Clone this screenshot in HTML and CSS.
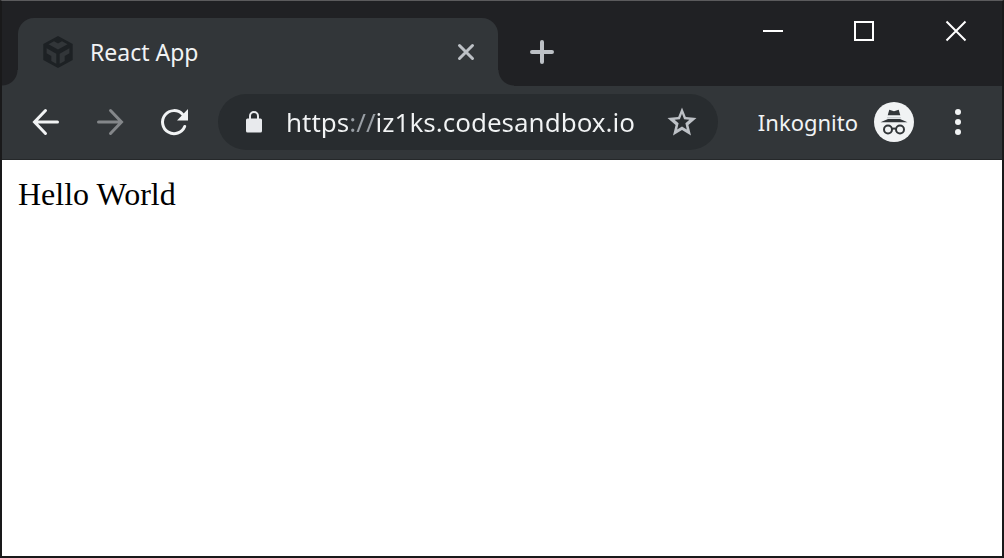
FILE: index.html
```html
<!DOCTYPE html>
<html lang="de">
<head>
<meta charset="utf-8">
<title>React App</title>
<link rel="stylesheet" href="styles.css">
</head>
<body>
<div class="window">
  <header class="tab-strip">
    <div class="tab">
      <svg class="favicon" viewBox="0 0 32 32" aria-hidden="true">
        <path fill-rule="evenodd" d="M16 0 30.700 8V24L16 32 1.300 24V8ZM6.500 8.300 16 13.500 25.500 8.300 20 5.300 16 7.500 12 5.300ZM4.600 12.300V17.300L9.300 20V25L14.300 27.800V17.800ZM27.400 12.300V17.300L22.700 20V25L17.700 27.800V17.800Z"/>
      </svg>
      <span class="tab-title">React App</span>
      <button class="tab-close" aria-label="Tab schließen"><svg viewBox="0 0 20 20"><path d="M3.500 3.500 16.500 16.500M16.500 3.500 3.500 16.500"/></svg></button>
    </div>
    <button class="new-tab" aria-label="Neuer Tab"><svg viewBox="0 0 24 24"><path d="M12 2V22M2 12H22"/></svg></button>
    <div class="window-controls">
      <button aria-label="Minimieren"><svg viewBox="0 0 20 20"><path d="M1 10H21"/></svg></button>
      <button aria-label="Maximieren"><svg viewBox="0 0 20 20"><path d="M1 1H19V19H1Z"/></svg></button>
      <button aria-label="Schließen"><svg viewBox="0 0 20 20"><path d="M.5 .5 19.5 19.5M19.5 .5 .5 19.5"/></svg></button>
    </div>
  </header>
  <nav class="toolbar">
    <div class="nav-buttons">
      <button aria-label="Zurück"><svg viewBox="0 0 32 32"><path class="line" d="M27.500 16H5M15.500 4.500 4.500 16 15.500 27.500"/></svg></button>
      <button aria-label="Vorwärts" disabled><svg viewBox="0 0 32 32"><path class="line" d="M4.500 16H27M16.500 4.500 27.500 16 16.500 27.500"/></svg></button>
      <button aria-label="Neu laden"><svg viewBox="0 0 32 32"><path class="line" d="M26.700 20.500A11.500 11.500 0 1 1 24.500 8.300"/><path class="solid" d="M30 3V14.500H19Z"/></svg></button>
    </div>
    <div class="address-bar">
      <svg class="lock" viewBox="0 0 16 22" aria-hidden="true"><path class="body" d="M1.500 7.500H14.500Q16 7.500 16 9V20Q16 21.500 14.500 21.500H1.500Q0 21.500 0 20V9Q0 7.500 1.500 7.500Z"/><path class="shackle" d="M4 8V5A4 4 0 0 1 12 5V8"/></svg>
      <input class="url" type="text" aria-label="Adresse" value="https://iz1ks.codesandbox.io" spellcheck="false">
      <button class="bookmark" aria-label="Lesezeichen"><svg viewBox="0 0 32 32"><path fill-rule="evenodd" d="M16 1.500 19.800 11 30.500 12 22.400 18.900 25 29.500 16 24 7 29.500 9.600 18.900 1.500 12 12.200 11ZM16 7.700 13.900 13.200 8.600 13.700 12.600 17.200 11.200 23.600 16 20.500 20.800 23.600 19.400 17.200 23.400 13.700 18.100 13.200Z"/></svg></button>
    </div>
    <button class="profile">
      <span>Inkognito</span>
      <svg viewBox="0 0 40 40" aria-hidden="true">
        <circle class="disc" cx="20" cy="20" r="20"/>
        <path class="hat" d="M15.300 7.700 20 9.200 24.700 7.700 26.300 13.300H13.700ZM6.500 20.200 14 17H26L33.500 20.200Z"/>
        <path class="band" d="M13 15.800H27"/>
        <g class="glasses"><circle cx="14" cy="27.500" r="4"/><circle cx="26" cy="27.500" r="4"/><path d="M18 27Q20 25.800 22 27"/></g>
      </svg>
    </button>
    <button class="menu" aria-label="Menü"><svg viewBox="0 0 6 26"><circle cx="3" cy="3" r="3"/><circle cx="3" cy="13" r="3"/><circle cx="3" cy="23" r="3"/></svg></button>
  </nav>
  <main class="page">Hello World</main>
</div>
</body>
</html>
```
FILE: styles.css
```css
* {
  box-sizing: border-box;
}

body {
  margin: 0;
  background: #ffffff;
}

button {
  display: flex;
  align-items: center;
  justify-content: center;
  padding: 0;
  border: 0;
  background: none;
  color: inherit;
  font: inherit;
}

svg {
  flex: none;
  overflow: visible;
  fill: none;
}

.window {
  display: flex;
  flex-direction: column;
  min-height: 100vh;
  border: 2px solid #19191a;
  border-top: 1px solid #5b5b5d;
  font-family: "Noto Sans", "Open Sans", sans-serif;
  color: #f1f3f4;
}

.tab-strip {
  display: flex;
  align-items: flex-start;
  height: 85px;
  padding-left: 16px;
  background: #202124;
}

.tab {
  position: relative;
  display: flex;
  flex: 0 1 480px;
  align-items: center;
  align-self: flex-end;
  height: 68px;
  padding: 0 22px 0 24px;
  border-radius: 16px 16px 0 0;
  background: #323639;
}

/* Concave feet that join the tab to the toolbar */
.tab::before,
.tab::after {
  content: "";
  position: absolute;
  bottom: 0;
  width: 16px;
  height: 16px;
}

.tab::before {
  right: 100%;
  background: radial-gradient(circle at 0 0, #202124 15px, #323639 16px);
}

.tab::after {
  left: 100%;
  background: radial-gradient(circle at 100% 0, #202124 15px, #323639 16px);
}

.favicon {
  width: 32px;
  height: 32px;
  fill: #1d2124;
}

.tab-title {
  flex: 1;
  margin-left: 16px;
  font-size: 23px;
  line-height: 32px;
}

.tab-close svg {
  width: 20px;
  height: 20px;
  stroke: #bdc1c6;
  stroke-width: 3;
  stroke-linecap: round;
}

.new-tab {
  width: 56px;
  height: 68px;
  margin: 17px 0 0 16px;
}

.new-tab svg {
  width: 24px;
  height: 24px;
  stroke: #bdc1c6;
  stroke-width: 4;
  stroke-linecap: round;
}

.window-controls {
  display: flex;
  margin-left: auto;
}

.window-controls button {
  width: 92px;
  height: 60px;
}

.window-controls svg {
  width: 20px;
  height: 20px;
  stroke: #ffffff;
  stroke-width: 2;
}

.toolbar {
  display: flex;
  align-items: center;
  height: 74px;
  padding: 0 12px 2px;
  border-bottom: 1px solid #25282a;
  background: #323639;
}

.nav-buttons {
  display: flex;
  margin-right: 12px;
}

.nav-buttons button {
  width: 64px;
  height: 56px;
}

.nav-buttons button:disabled {
  color: #84878a;
}

.nav-buttons svg {
  width: 32px;
  height: 32px;
}

.line {
  stroke: currentColor;
  stroke-width: 3;
  stroke-linecap: round;
}

.solid {
  fill: currentColor;
}

.address-bar {
  display: flex;
  flex: 1;
  align-items: center;
  height: 56px;
  min-width: 0;
  padding: 0 20px 0 28px;
  border-radius: 28px;
  background: #282c2f;
}

.lock {
  width: 16px;
  height: 22px;
}

.lock .body {
  fill: #e8eaed;
}

.lock .shackle {
  stroke: #e8eaed;
  stroke-width: 2;
}

/* The "://" separator is dimmed by the gradient clipped to the text */
.url {
  flex: 1;
  min-width: 0;
  height: 40px;
  margin-left: 24px;
  padding: 0;
  border: 0;
  outline: 0;
  background: linear-gradient(to right, #f1f3f4 63px, #9aa0a6 63px 89px, #f1f3f4 89px);
  background-clip: text;
  color: transparent;
  font-family: inherit;
  font-size: 26px;
}

.bookmark svg {
  width: 32px;
  height: 32px;
  fill: #bdc1c6;
}

.profile {
  gap: 16px;
  margin-left: 40px;
  font-size: 22px;
  line-height: 32px;
}

.profile svg {
  width: 40px;
  height: 40px;
}

.disc {
  fill: #f1f3f4;
}

.hat {
  fill: #323639;
}

.band {
  stroke: #bdc1c6;
  stroke-width: 1;
}

.glasses {
  stroke: #323639;
  stroke-width: 2;
}

.menu {
  width: 64px;
  height: 56px;
  margin-left: 12px;
}

.menu svg {
  width: 6px;
  height: 26px;
  fill: #f1f3f4;
}

.page {
  flex: 1;
  padding: 16px;
  background: #ffffff;
  color: #000000;
  font-family: "Liberation Serif", "Times New Roman", serif;
  font-size: 32px;
  line-height: 36px;
}
```
